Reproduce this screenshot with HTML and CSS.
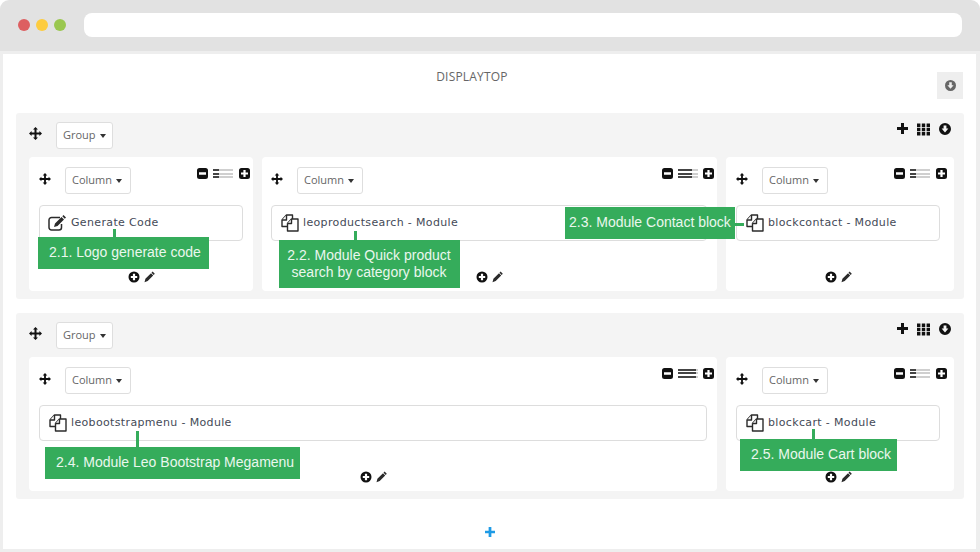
FILE: index.html
```html
<!DOCTYPE html>
<html lang="en">
<head>
<meta charset="utf-8">
<title>DISPLAYTOP</title>
<link rel="stylesheet" href="styles.css">
</head>
<body>
<svg class="sprite" aria-hidden="true">
  <symbol id="i-move" viewBox="0 0 13 13"><path d="M6.500 0 9 2.600H7.500V5.500H10.400V4L13 6.500 10.400 9V7.500H7.500V10.400H9L6.500 13 4 10.400H5.500V7.500H2.600V9L0 6.500 2.600 4V5.500H5.500V2.600H4Z"/></symbol>
  <symbol id="i-plus" viewBox="0 0 11 11"><path d="M4 0H7V4H11V7H7V11H4V7H0V4H4Z"/></symbol>
  <symbol id="i-grid" viewBox="0 0 13 12"><path d="M0 0H3.400V3.400H0ZM4.800 0H8.200V3.400H4.800ZM9.600 0H13V3.400H9.600ZM0 4.300H3.400V7.700H0ZM4.800 4.300H8.200V7.700H4.800ZM9.600 4.300H13V7.700H9.600ZM0 8.600H3.400V12H0ZM4.800 8.600H8.200V12H4.800ZM9.600 8.600H13V12H9.600Z"/></symbol>
  <symbol id="i-down" viewBox="0 0 12 12"><path fill-rule="evenodd" d="M6 0a6 6 0 1 1 0 12A6 6 0 0 1 6 0ZM4.600 2.500V5.600H2.600L6 9.500 9.400 5.600H7.400V2.500Z"/></symbol>
  <symbol id="i-add" viewBox="0 0 12 12"><path fill-rule="evenodd" d="M6 .5a5.500 5.500 0 1 1 0 11A5.500 5.500 0 0 1 6 .5ZM4.900 2.800V4.900H2.800V7.100H4.900V9.200H7.100V7.100H9.200V4.900H7.100V2.800Z"/></symbol>
  <symbol id="i-edit" viewBox="0 0 11 12"><path d="M8.600.6 10.800 2.800 9.700 3.900 7.500 1.700ZM7 2.200 9.200 4.400 3.700 10 .5 11.200 1.400 7.800Z" fill="#2b2b2b"/></symbol>
  <symbol id="i-minus-box" viewBox="0 0 11 11"><path fill-rule="evenodd" d="M2.500 0H8.500A2.500 2.500 0 0 1 11 2.500V8.500A2.500 2.500 0 0 1 8.500 11H2.500A2.500 2.500 0 0 1 0 8.500V2.500A2.500 2.500 0 0 1 2.500 0ZM2 4.300V6.700H9V4.300Z"/></symbol>
  <symbol id="i-plus-box" viewBox="0 0 11 11"><path fill-rule="evenodd" d="M2.500 0H8.500A2.500 2.500 0 0 1 11 2.500V8.500A2.500 2.500 0 0 1 8.500 11H2.500A2.500 2.500 0 0 1 0 8.500V2.500A2.500 2.500 0 0 1 2.500 0ZM4.400 2V4.400H2V6.600H4.400V9H6.600V6.600H9V4.400H6.600V2Z"/></symbol>
  <symbol id="i-copy" viewBox="0 0 18 18"><g fill="#fff" stroke="#2b2b2b" stroke-width="1.400" stroke-linejoin="round"><path d="M5.500 1H11.500V12.500H1V6Z"/><path d="M5.500 1V6H1"/><path d="M10.500 5H17V17H6.500V9.500Z"/><path d="M10.500 5V9.500H6.500"/></g></symbol>
  <symbol id="i-gen" viewBox="0 0 18 16"><path fill="none" stroke="#2b2b2b" stroke-width="1.500" d="M12 2.500H3.500A2.500 2.500 0 0 0 1 5V12.500A2.500 2.500 0 0 0 3.500 15H11A2.500 2.500 0 0 0 13.500 12.500V9"/><path fill="#2b2b2b" d="M15.500 0 18 2.500 16.800 3.700 14.300 1.200ZM13.500 2 16 4.500 9.500 11 6 12 7 8.500Z"/></symbol>
</svg>
<div class="shell">
  <header class="bar">
    <div class="dots"><span class="dot red"></span><span class="dot yellow"></span><span class="dot green"></span></div>
    <div class="address"></div>
  </header>
  <div class="frame">
    <main class="page">
      <div class="page-head">
        <h1 class="title">DISPLAYTOP</h1>
        <button class="collapse" type="button"><svg class="ic11"><use href="#i-down"/></svg></button>
      </div>

      <section class="group">
        <div class="group-head">
          <svg class="ic13 move"><use href="#i-move"/></svg>
          <span class="btn btn-group">Group<i class="caret"></i></span>
          <div class="group-tools">
            <svg class="ic11"><use href="#i-plus"/></svg>
            <svg class="ic13"><use href="#i-grid"/></svg>
            <svg class="ic12"><use href="#i-down"/></svg>
          </div>
        </div>
        <div class="cols">
          <article class="col w224">
            <div class="col-head">
              <svg class="ic12 move"><use href="#i-move"/></svg>
              <span class="btn">Column<i class="caret"></i></span>
              <div class="col-tools">
                <svg class="ic11"><use href="#i-minus-box"/></svg>
                <span class="bars bars-w"><b class="dark d1"></b></span>
                <svg class="ic11"><use href="#i-plus-box"/></svg>
              </div>
            </div>
            <div class="module"><svg class="ic18 ic-gen"><use href="#i-gen"/></svg><span class="label">Generate Code</span></div>
            <div class="col-foot"><svg class="ic12"><use href="#i-add"/></svg><svg class="ic-edit"><use href="#i-edit"/></svg></div>
          </article>
          <article class="col w455">
            <div class="col-head">
              <svg class="ic12 move"><use href="#i-move"/></svg>
              <span class="btn">Column<i class="caret"></i></span>
              <div class="col-tools">
                <svg class="ic11"><use href="#i-minus-box"/></svg>
                <span class="bars"><b class="dark d2"></b></span>
                <svg class="ic11"><use href="#i-plus-box"/></svg>
              </div>
            </div>
            <div class="module"><svg class="ic18"><use href="#i-copy"/></svg><span class="label">leoproductsearch - Module</span></div>
            <div class="col-foot"><svg class="ic12"><use href="#i-add"/></svg><svg class="ic-edit"><use href="#i-edit"/></svg></div>
          </article>
          <article class="col w228">
            <div class="col-head">
              <svg class="ic12 move"><use href="#i-move"/></svg>
              <span class="btn">Column<i class="caret"></i></span>
              <div class="col-tools">
                <svg class="ic11"><use href="#i-minus-box"/></svg>
                <span class="bars bars-w"><b class="dark d1"></b></span>
                <svg class="ic11"><use href="#i-plus-box"/></svg>
              </div>
            </div>
            <div class="module"><svg class="ic18"><use href="#i-copy"/></svg><span class="label">blockcontact - Module</span></div>
            <div class="col-foot"><svg class="ic12"><use href="#i-add"/></svg><svg class="ic-edit"><use href="#i-edit"/></svg></div>
          </article>
        </div>
      </section>

      <section class="group">
        <div class="group-head">
          <svg class="ic13 move"><use href="#i-move"/></svg>
          <span class="btn btn-group">Group<i class="caret"></i></span>
          <div class="group-tools">
            <svg class="ic11"><use href="#i-plus"/></svg>
            <svg class="ic13"><use href="#i-grid"/></svg>
            <svg class="ic12"><use href="#i-down"/></svg>
          </div>
        </div>
        <div class="cols">
          <article class="col w688">
            <div class="col-head">
              <svg class="ic12 move"><use href="#i-move"/></svg>
              <span class="btn">Column<i class="caret"></i></span>
              <div class="col-tools">
                <svg class="ic11"><use href="#i-minus-box"/></svg>
                <span class="bars"><b class="dark d3"></b></span>
                <svg class="ic11"><use href="#i-plus-box"/></svg>
              </div>
            </div>
            <div class="module"><svg class="ic18"><use href="#i-copy"/></svg><span class="label">leobootstrapmenu - Module</span></div>
            <div class="col-foot"><svg class="ic12"><use href="#i-add"/></svg><svg class="ic-edit"><use href="#i-edit"/></svg></div>
          </article>
          <article class="col w228">
            <div class="col-head">
              <svg class="ic12 move"><use href="#i-move"/></svg>
              <span class="btn">Column<i class="caret"></i></span>
              <div class="col-tools">
                <svg class="ic11"><use href="#i-minus-box"/></svg>
                <span class="bars bars-w"><b class="dark d1"></b></span>
                <svg class="ic11"><use href="#i-plus-box"/></svg>
              </div>
            </div>
            <div class="module"><svg class="ic18"><use href="#i-copy"/></svg><span class="label">blockcart - Module</span></div>
            <div class="col-foot"><svg class="ic12"><use href="#i-add"/></svg><svg class="ic-edit"><use href="#i-edit"/></svg></div>
          </article>
        </div>
      </section>

      <div class="page-foot"><svg class="ic-blue"><use href="#i-plus"/></svg></div>
    </main>
  </div>

  <div class="note n1">2.1. Logo generate code</div>
  <div class="note n2">2.2. Module Quick product<br>search by category block</div>
  <div class="note n3">2.3. Module Contact block</div>
  <div class="note n4">2.4. Module Leo Bootstrap Megamenu</div>
  <div class="note n5">2.5. Module Cart block</div>
</div>
</body>
</html>
```

FILE: styles.css
```css
* { box-sizing: border-box; }
html, body { margin: 0; padding: 0; background: #fff; }
body { width: 980px; height: 552px; overflow: hidden; }
.sprite { position: absolute; width: 0; height: 0; }
svg { display: block; flex: none; fill: #111; }

.shell { position: relative; width: 980px; height: 552px; overflow: hidden; }

.bar {
  display: flex;
  align-items: center;
  gap: 18px;
  height: 51px;
  padding: 0 18px 1px;
  background: #e2e2e2;
  border-radius: 9px 9px 0 0;
}
.dots { display: flex; gap: 6px; }
.dot { width: 12px; height: 12px; border-radius: 50%; }
.red { background: #dd5f61; }
.yellow { background: #fdcc3f; }
.green { background: #9ac74f; }
.address { flex: 1; height: 24px; background: #fff; border-radius: 8px; }

.frame { height: 501px; padding: 3px 4px 3px 3px; background: #eeeeee; }
.page { height: 495px; padding: 0 12px 0 13px; background: #fff; }

.page-head { display: flex; height: 59px; padding-top: 18px; gap: 9px; }
.title {
  flex: 0 0 912px;
  margin: -3px 0 0;
  font: 400 12px/16px "Open Sans", sans-serif;
  letter-spacing: .2px;
  color: #666;
  text-align: center;
}
.collapse {
  display: flex;
  align-items: center;
  justify-content: center;
  width: 26px;
  height: 27px;
  padding: 0;
  border: 0;
  background: #eeeeee;
}
.collapse svg { fill: #666; }

.group {
  height: 186px;
  margin-bottom: 14px;
  padding: 9px 10px 7px 13px;
  background: #f4f4f4;
  border-radius: 3px;
}
.group-head { display: flex; align-items: flex-start; height: 27px; margin-bottom: 8px; }
.group-head .move { margin: 5px 14px 0 0; }
.group-tools { display: flex; gap: 9px; margin: 1px 3px 0 auto; }

.cols { display: flex; gap: 9px; }
.col {
  --pl: 10px;
  --tr: 3px;
  --mr: 10px;
  height: 134px;
  padding-top: 10px;
  background: #fff;
  border-radius: 4px;
}
.w224 { width: 224px; }
.w228 { width: 228px; --tr: 7px; --mr: 14px; }
.w455 { width: 455px; --pl: 9px; }
.w688 { width: 688px; }

.col-head {
  display: flex;
  align-items: flex-start;
  height: 27px;
  margin: 0 var(--tr) 11px var(--pl);
}
.col-head .move { margin: 6px 14px 0 0; }
.col-tools { display: flex; gap: 5px; margin: 1px 0 0 auto; align-items: center; }

.btn {
  display: flex;
  align-items: center;
  width: 66px;
  height: 27px;
  padding: 0 0 2px 6px;
  font: 400 11px/1 "Open Sans", sans-serif;
  color: #666;
  background: #fff;
  border: 1px solid #dedede;
  border-radius: 3px;
}
.btn-group { width: 57px; }
.caret {
  width: 0;
  height: 0;
  margin: 2px 0 0 4px;
  border-top: 4px solid #333;
  border-left: 3px solid transparent;
  border-right: 3px solid transparent;
}

.bars {
  position: relative;
  width: 20px;
  height: 9px;
  background: repeating-linear-gradient(to bottom, #cfcfcf 0 2px, #fff 2px 3.500px);
}
.bars-w { margin-right: 1px; }
.dark {
  position: absolute;
  inset: 0 auto 0 0;
  background: repeating-linear-gradient(to bottom, #444 0 2px, #fff 2px 3.500px);
}
.d1 { width: 6px; }
.d2 { width: 14px; }
.d3 { width: 18px; }

.module {
  display: flex;
  align-items: center;
  gap: 4px;
  height: 36px;
  margin: 0 var(--mr) 0 var(--pl);
  padding-left: 9px;
  font: 400 11px/1 "DejaVu Sans", sans-serif;
  letter-spacing: .35px;
  color: #444a57;
  background: #fff;
  border: 1px solid #ddd;
  border-radius: 4px;
}
.label { margin-top: -2px; }
.ic-gen { margin: 0 1px 0 -1px; height: 16px; }
.col-foot {
  display: flex;
  justify-content: center;
  gap: 4px;
  margin: 30px var(--mr) 0 var(--pl);
}

.page-foot { display: flex; justify-content: center; padding-top: 14px; }
.ic-blue { width: 10px; height: 10px; fill: #1e9be6; }

.ic11 { width: 11px; height: 11px; }
.ic12 { width: 12px; height: 12px; }
.ic13 { width: 13px; height: 13px; }
.ic18 { width: 18px; height: 18px; }
.ic-edit { width: 11px; height: 12px; }

.note {
  position: absolute;
  height: 32px;
  font: 400 14px/30px "Liberation Sans", sans-serif;
  color: #eaf7ee;
  background: #35ac5b;
  white-space: nowrap;
}
.note::before { content: ""; position: absolute; background: #35ac5b; }
.n1 { left: 38px; top: 237px; width: 171px; padding-left: 11px; }
.n1::before { left: 75px; top: -8px; width: 3px; height: 8px; }
.n2 { left: 279px; top: 240px; width: 181px; height: 48px; padding: 7px 1px 0 0; line-height: 17px; text-align: center; }
.n2::before { left: 75px; top: -9px; width: 3px; height: 9px; }
.n3 { left: 565px; top: 207px; width: 170px; padding-left: 4px; }
.n3::before { left: 170px; top: 16px; width: 9px; height: 3px; }
.n4 { left: 45px; top: 447px; width: 255px; padding-left: 11px; }
.n4::before { left: 91px; top: -16px; width: 3px; height: 16px; }
.n5 { left: 740px; top: 439px; width: 157px; padding-left: 11px; }
.n5::before { left: 72px; top: -10px; width: 3px; height: 10px; }
```
